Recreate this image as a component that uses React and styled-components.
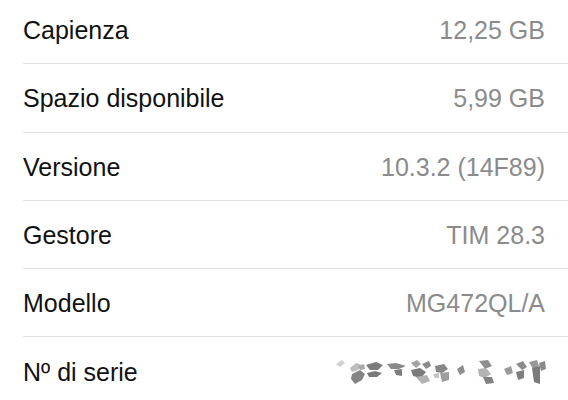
import React from 'react';
import styled, { createGlobalStyle } from 'styled-components';

const Global = createGlobalStyle`
  html, body {
    margin: 0;
    padding: 0;
    background: #ffffff;
    overflow: hidden;
  }
`;

const List = styled.div`
  width: 568px;
  height: 400px;
  overflow: hidden;
  background: #fff;
  padding-left: 23px;
  box-sizing: border-box;
  font-family: "Liberation Sans", Arial, sans-serif;
`;

const Inner = styled.div`
  margin-top: -4px;
`;

const Row = styled.div`
  height: 68.25px;
  box-sizing: border-box;
  display: flex;
  align-items: center;
  justify-content: space-between;
  padding-right: 23px;
  border-bottom: ${p => (p.$last ? 'none' : '1.5px solid #e0e0e0')};
`;

const Label = styled.span`
  font-size: 25px;
  color: #111111;
  padding-top: 2px;
`;

const Value = styled.span`
  font-size: 25px;
  color: #8b8b8b;
  padding-top: 2px;
`;

const Scramble = styled.svg`
  display: block;
  margin-top: 4px;
  margin-right: -1px;
`;

// pixel-scrambled serial number, drawn as grey chunks
const chunks = [
  ['M0 4 L6 0 L9 3 L4 7 Z', '#d2d2d2'],
  ['M14 8 L20 3 L26 5 L22 10 L16 12 Z', '#bdbdbd'],
  ['M16 14 L24 10 L29 14 L26 20 L19 24 L15 19 Z', '#858585'],
  ['M22 6 L28 4 L29 9 L24 10 Z', '#a9a9a9'],
  ['M30 5 L40 2 L47 5 L42 10 L34 10 Z', '#7c7c7c'],
  ['M31 13 L39 11 L46 13 L41 17 L33 17 Z', '#7a7a7a'],
  ['M51 4 L60 3 L70 6 L63 9 L55 9 Z', '#8a8a8a'],
  ['M58 10 L66 9 L66 16 L60 15 Z', '#7d7d7d'],
  ['M75 3 L81 0 L85 4 L80 8 Z', '#a4a4a4'],
  ['M75 10 L84 8 L90 12 L85 18 L77 16 Z', '#7b7b7b'],
  ['M80 17 L91 15 L94 21 L86 24 Z', '#b2b2b2'],
  ['M86 4 L93 1 L95 6 L90 9 Z', '#8c8c8c'],
  ['M99 6 L108 4 L112 9 L106 13 L100 12 Z', '#868686'],
  ['M104 13 L113 12 L113 20 L106 22 Z', '#9d9d9d'],
  ['M97 14 L103 13 L103 18 L99 18 Z', '#c4c4c4'],
  ['M121 9 L127 5 L129 12 L124 15 Z', '#8f8f8f'],
  ['M143 1 L152 0 L156 6 L149 9 Z', '#8e8e8e'],
  ['M142 9 L150 8 L155 14 L149 18 L143 16 Z', '#b3b3b3'],
  ['M147 17 L156 17 L158 23 L150 24 Z', '#808080'],
  ['M168 9 L175 6 L177 13 L171 15 Z', '#9a9a9a'],
  ['M180 4 L187 1 L191 7 L186 10 Z', '#8c8c8c'],
  ['M180 12 L188 10 L188 18 L182 20 Z', '#7e7e7e'],
  ['M193 2 L201 0 L203 6 L197 9 Z', '#989898'],
  ['M196 8 L204 6 L204 24 L198 22 Z', '#7a7a7a'],
  ['M203 3 L209 1 L210 9 L205 11 Z', '#8a8a8a'],
];

function Serial() {
  return (
    <Scramble width="210" height="26" viewBox="0 0 210 26">
      {chunks.map(([d, c], i) => (
        <path key={i} d={d} fill={c} />
      ))}
    </Scramble>
  );
}

const rows = [
  ['Capienza', '12,25 GB'],
  ['Spazio disponibile', '5,99 GB'],
  ['Versione', '10.3.2 (14F89)'],
  ['Gestore', 'TIM 28.3'],
  ['Modello', 'MG472QL/A'],
];

export default function App() {
  return (
    <>
      <Global />
      <List>
        <Inner>
          {rows.map(([l, v]) => (
            <Row key={l}>
              <Label>{l}</Label>
              <Value>{v}</Value>
            </Row>
          ))}
          <Row $last>
            <Label>Nº di serie</Label>
            <Serial />
          </Row>
        </Inner>
      </List>
    </>
  );
}
